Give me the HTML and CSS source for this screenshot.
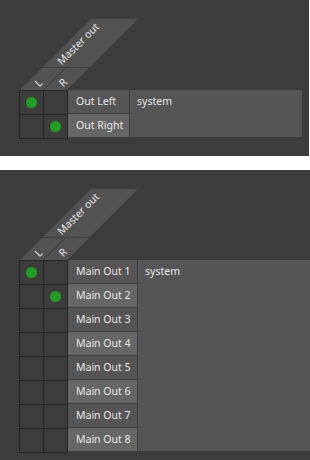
FILE: index.html
```html
<!DOCTYPE html>
<html lang="en">
<head>
    <meta charset="UTF-8">
    <meta name="viewport" content="width=device-width, initial-scale=1.0">
    <title>Port Matrix</title>
    <link rel="stylesheet" href="styles.css">
</head>
<body>

    <div class="panel panel-small">
        <svg class="header" width="121" height="72" viewBox="0 0 121 72">
            <polygon class="head" points="0,72.5 24,72.5 47,49.5 23,49.5"/>
            <polygon class="head" points="24,72.5 48,72.5 71,49.5 47,49.5"/>
            <polygon class="head" points="23,49.5 71,49.5 120,0.5 72,0.5"/>
            <text class="head-text" transform="translate(0,72) rotate(-45)" x="16" y="8.5">L</text>
            <text class="head-text" transform="translate(24,72) rotate(-45)" x="16" y="8.5">R</text>
            <text class="head-text" transform="translate(23,49) rotate(-45)" x="15" y="9">Master out</text>
        </svg>
        <div class="matrix">
            <div class="dots">
                <div class="cell"><span class="dot"></span></div>
                <div class="cell"></div>
                <div class="cell"></div>
                <div class="cell"><span class="dot"></span></div>
            </div>
            <div class="ports">
                <div class="labels">
                    <div class="label">Out Left</div>
                    <div class="label">Out Right</div>
                </div>
                <div class="group">system</div>
            </div>
        </div>
    </div>

    <div class="panel panel-large">
        <svg class="header" width="121" height="72" viewBox="0 0 121 72">
            <polygon class="head" points="0,72.5 24,72.5 47,49.5 23,49.5"/>
            <polygon class="head" points="24,72.5 48,72.5 71,49.5 47,49.5"/>
            <polygon class="head" points="23,49.5 71,49.5 120,0.5 72,0.5"/>
            <text class="head-text" transform="translate(0,72) rotate(-45)" x="16" y="8.5">L</text>
            <text class="head-text" transform="translate(24,72) rotate(-45)" x="16" y="8.5">R</text>
            <text class="head-text" transform="translate(23,49) rotate(-45)" x="15" y="9">Master out</text>
        </svg>
        <div class="matrix">
            <div class="dots">
                <div class="cell"><span class="dot"></span></div>
                <div class="cell"></div>
                <div class="cell"></div>
                <div class="cell"><span class="dot"></span></div>
                <div class="cell"></div>
                <div class="cell"></div>
                <div class="cell"></div>
                <div class="cell"></div>
                <div class="cell"></div>
                <div class="cell"></div>
                <div class="cell"></div>
                <div class="cell"></div>
                <div class="cell"></div>
                <div class="cell"></div>
                <div class="cell"></div>
                <div class="cell"></div>
            </div>
            <div class="ports">
                <div class="labels">
                    <div class="label">Main Out 1</div>
                    <div class="label">Main Out 2</div>
                    <div class="label">Main Out 3</div>
                    <div class="label">Main Out 4</div>
                    <div class="label">Main Out 5</div>
                    <div class="label">Main Out 6</div>
                    <div class="label">Main Out 7</div>
                    <div class="label">Main Out 8</div>
                </div>
                <div class="group">system</div>
            </div>
        </div>
    </div>

</body>
</html>
```

FILE: styles.css
```css
html, body {
    margin: 0;
    background-color: #ffffff;
    overflow: hidden;
}
body {
    font-family: "Noto Sans", sans-serif;
    font-size: 10.5px;
    color: #e6e6e6;
}
.panel {
    background-color: #3c3c3c;
    padding: 18px 0 17px 19px;
    box-sizing: border-box;
}
.panel-small {
    width: 309px;
    margin-bottom: 14px;
}
.panel-large {
    width: 310px;
}
.header {
    display: block;
}
.head {
    fill: #525252;
    stroke: #3f3f3f;
    stroke-width: 1;
}
.head-text {
    fill: #e6e6e6;
    font-family: "Noto Sans", sans-serif;
    font-size: 10.5px;
    dominant-baseline: central;
}
.matrix {
    display: flex;
    align-items: flex-start;
}
.dots {
    display: grid;
    grid-template-columns: 24px 24px;
    grid-auto-rows: 24px;
    border-right: 1px solid #262626;
    border-bottom: 1px solid #262626;
}
.cell {
    border-left: 1px solid #262626;
    border-top: 1px solid #262626;
    display: flex;
    align-items: center;
    justify-content: center;
}
.dot {
    width: 11px;
    height: 11px;
    border-radius: 50%;
    background-color: #1f9f1f;
}
.ports {
    display: flex;
    gap: 1px;
}
.labels {
    display: flex;
    flex-direction: column;
    gap: 1px;
    width: 61px;
}
.panel-large .labels {
    width: 69px;
}
.label {
    height: 23px;
    line-height: 23px;
    padding-left: 8px;
    background-color: #555555;
    white-space: nowrap;
}
.label:nth-child(even) {
    background-color: #666666;
}
.group {
    width: 172px;
    box-sizing: border-box;
    padding: 0 7px;
    line-height: 23px;
    background-color: #555555;
}
```
